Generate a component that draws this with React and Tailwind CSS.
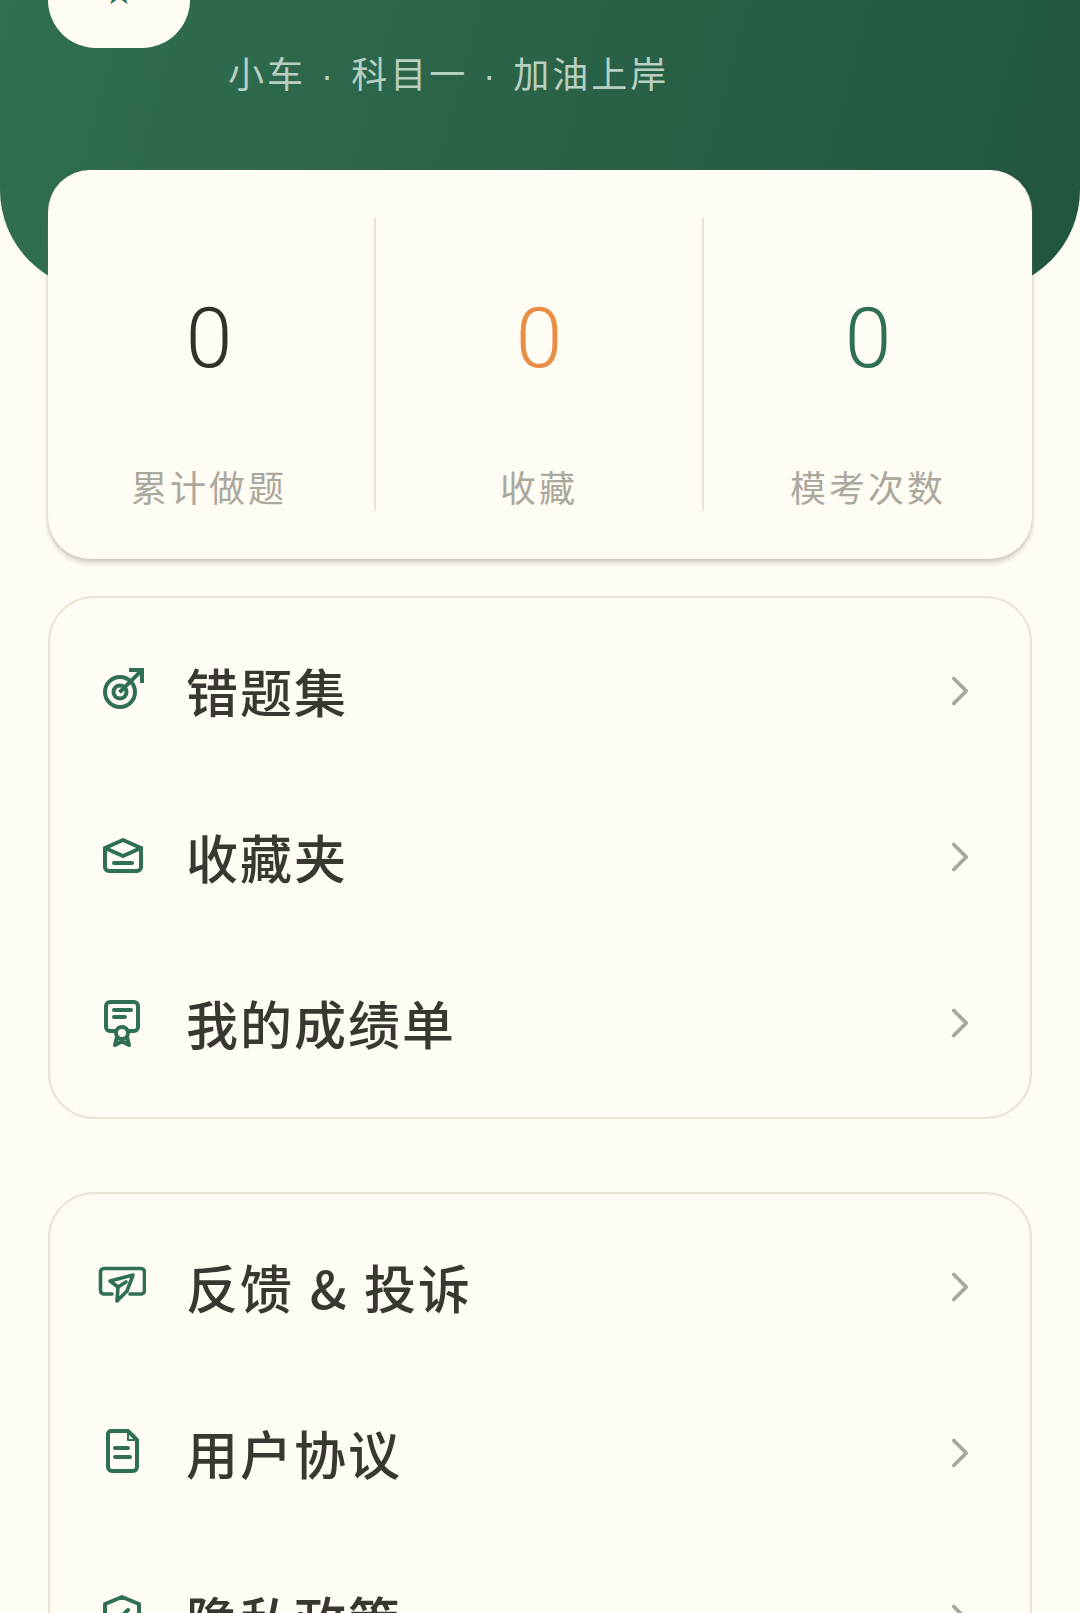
import { ChevronRight } from 'lucide-react';

const GREEN = '#2f6f52';

const TargetIcon = () => (
  <svg viewBox="0 0 48 48" className="w-12 h-12" fill="none" stroke={GREEN} strokeWidth="4" strokeLinecap="square">
    <circle cx="22" cy="25" r="15" />
    <circle cx="22" cy="25" r="6.500" />
    <path d="M23 24 L43 4" />
    <path d="M33 3 H44 V14" />
  </svg>
);

const MailIcon = () => (
  <svg viewBox="0 0 48 48" className="w-12 h-12" fill="none" stroke={GREEN} strokeWidth="4" strokeLinejoin="round" strokeLinecap="round">
    <path d="M7 15 L25 7 L43 15 V34 a4 4 0 0 1 -4 4 H11 a4 4 0 0 1 -4 -4 Z" />
    <path d="M7 15 L25 23 L43 15" />
    <path d="M16 30 H34" />
  </svg>
);

const CertIcon = () => (
  <svg viewBox="0 0 48 48" className="w-12 h-12" fill="none" stroke={GREEN} strokeWidth="4" strokeLinejoin="round" strokeLinecap="round">
    <path d="M16 32 H12 a4 4 0 0 1 -4 -4 V7 a4 4 0 0 1 4 -4 H36 a4 4 0 0 1 4 4 V28 a4 4 0 0 1 -4 4 H32" />
    <path d="M16 11 H33 M16 18 H27" />
    <circle cx="24" cy="34" r="6" />
    <path d="M19 38 L17 46 L24 42.500 L31 46 L29 38" />
  </svg>
);

const SendIcon = () => (
  <svg viewBox="0 0 48 48" className="w-12 h-12" fill="none" stroke={GREEN} strokeWidth="3.600" strokeLinejoin="round" strokeLinecap="round">
    <path d="M14 31 H6 a3.500 3.500 0 0 1 -3.500 -3.500 V9 a3.500 3.500 0 0 1 3.500 -3.500 H43 a3.500 3.500 0 0 1 3.500 3.500 V27.500 a3.500 3.500 0 0 1 -3.500 3.500 H32" />
    <path d="M35 12 L12 18 L20 24 L19 38 L29 28 Z" />
    <path d="M20 24 L28 19" />
  </svg>
);

const DocIcon = () => (
  <svg viewBox="0 0 48 48" className="w-12 h-12" fill="none" stroke={GREEN} strokeWidth="4" strokeLinejoin="round" strokeLinecap="round">
    <path d="M13 2 H30 L39 11 V38 a4 4 0 0 1 -4 4 H14 a4 4 0 0 1 -4 -4 V5 a3 3 0 0 1 3 -3 Z" />
    <path d="M30 4 V11 H37" strokeWidth="2" />
    <path d="M17 19 H30 M17 28 H32" />
  </svg>
);

const ShieldIcon = () => (
  <svg viewBox="0 0 48 48" className="w-12 h-12" fill="none" stroke={GREEN} strokeWidth="4" strokeLinejoin="round" strokeLinecap="round">
    <path d="M24 2 L41 9 V30 L24 44 L7 30 V9 Z" />
    <path d="M26 19 L30 15" />
  </svg>
);

const stats = [
  { label: '累计做题', color: 'text-[#33302b]', pad: 'pr-[4px]' },
  { label: '收藏', color: 'text-[#e88e45]', pad: '' },
  { label: '模考次数', color: 'text-[#2f6f52]', pad: '' },
];

const group1 = [
  { Icon: TargetIcon, label: '错题集' },
  { Icon: MailIcon, label: '收藏夹' },
  { Icon: CertIcon, label: '我的成绩单' },
];

const group2 = [
  { Icon: SendIcon, label: '反馈 & 投诉' },
  { Icon: DocIcon, label: '用户协议' },
  { Icon: ShieldIcon, label: '隐私政策' },
];

const MenuCard = ({ items, className }) => (
  <div className={`mx-12 rounded-[46px] border-2 border-[#e9e4d4] pt-[10px] pb-[11px] ${className}`}>
    {items.map(({ Icon, label }) => (
      <div key={label} className="h-[166px] flex items-center pl-[48px] pr-[45px]">
        <Icon />
        <span className="ml-[40px] flex-1 text-[52px] leading-none font-medium tracking-[2px] [word-spacing:2px] text-[#3a3732]">
          {label}
        </span>
        <ChevronRight className="w-[50px] h-[50px] text-[#a9a69c]" strokeWidth={1.8} />
      </div>
    ))}
  </div>
);

export default function App() {
  return (
    <div className="h-[1613px] w-[1080px] overflow-hidden bg-[#fffcf3] font-['Noto_Sans_CJK_SC',sans-serif]">
      <div className="h-[290px] rounded-b-[100px] bg-[linear-gradient(105deg,#306f50,#22553f)] overflow-hidden">
        <div className="ml-12 -mt-[90px] w-[142px] h-[138px] rounded-[48px] bg-[#fffcf3] flex justify-center">
          <span className="mt-[64px] text-[#2f6f52] text-[36px] leading-[36px] font-['DejaVu_Sans',sans-serif]">★</span>
        </div>
        <p className="ml-[228px] mt-[1px] text-[36px] leading-[46px] tracking-[3px] [word-spacing:4px] text-[#b9cfc2]">
          小车 <span className="font-['Liberation_Sans',sans-serif]">·</span> 科目一 <span className="font-['Liberation_Sans',sans-serif]">·</span> 加油上岸
        </p>
      </div>

      <div className="-mt-[120px] mx-12 h-[389px] rounded-[42px] bg-[#fffcf3] shadow-[0_4px_5px_rgba(120,110,90,0.3),0_0_3px_rgba(120,110,90,0.25)] grid grid-cols-3 py-[48px]">
        {stats.map((s, i) => (
          <div key={s.label} className={`flex flex-col items-center ${s.pad} ${i < 2 ? 'border-r-2 border-[#e9e4d4]' : ''}`}>
            <span className={`mt-[71px] text-[84px] leading-[100px] font-light font-['Roboto',sans-serif] ${s.color}`}>0</span>
            <span className="mt-[75px] text-[36px] leading-[44px] tracking-[3px] text-[#aba89e]">{s.label}</span>
          </div>
        ))}
      </div>

      <MenuCard items={group1} className="mt-[37px]" />
      <MenuCard items={group2} className="mt-[73px]" />
    </div>
  );
}
